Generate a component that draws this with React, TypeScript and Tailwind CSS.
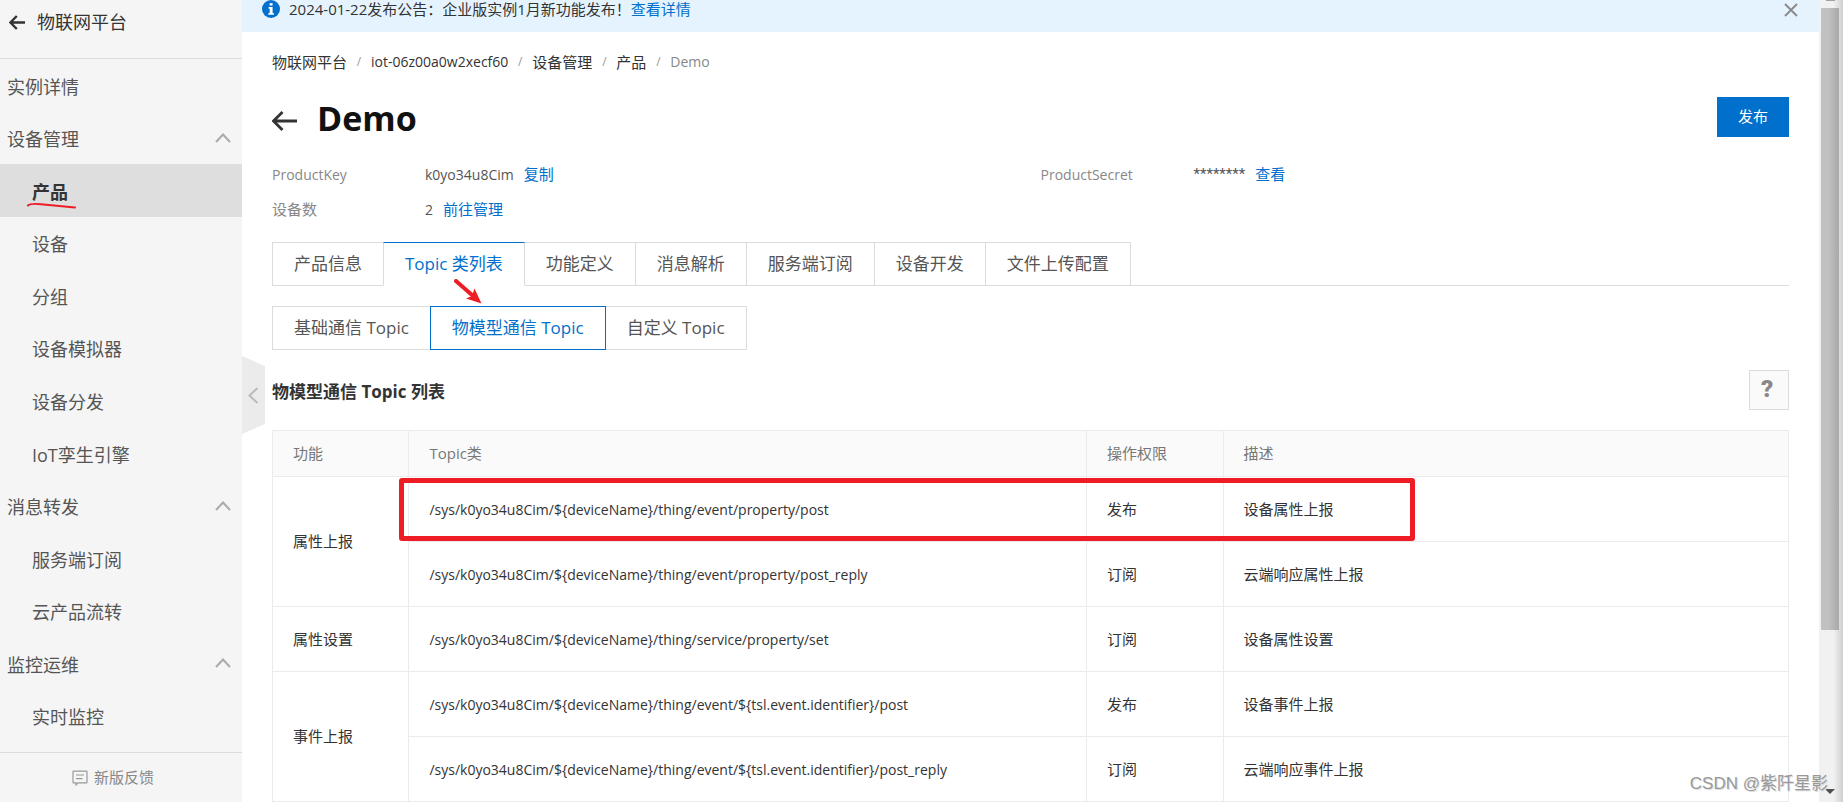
import React from "react";

type NavItem = { label: string; child?: boolean; active?: boolean; open?: boolean };

const NAV: NavItem[] = [
  { label: "实例详情" },
  { label: "设备管理", open: true },
  { label: "产品", child: true, active: true },
  { label: "设备", child: true },
  { label: "分组", child: true },
  { label: "设备模拟器", child: true },
  { label: "设备分发", child: true },
  { label: "IoT孪生引擎", child: true },
  { label: "消息转发", open: true },
  { label: "服务端订阅", child: true },
  { label: "云产品流转", child: true },
  { label: "监控运维", open: true },
  { label: "实时监控", child: true },
];

const CRUMBS = [
  { label: "物联网平台" },
  { label: "iot-06z00a0w2xecf60", latin: true },
  { label: "设备管理" },
  { label: "产品" },
];
const TABS = ["产品信息", "Topic 类列表", "功能定义", "消息解析", "服务端订阅", "设备开发", "文件上传配置"];
const SUB_TABS = ["基础通信 Topic", "物模型通信 Topic", "自定义 Topic"];

type Row = { group?: string; span?: number; topic: string; access: string; desc: string };

const ROWS: Row[] = [
  { group: "属性上报", span: 2, topic: "/sys/k0yo34u8Cim/${deviceName}/thing/event/property/post", access: "发布", desc: "设备属性上报" },
  { topic: "/sys/k0yo34u8Cim/${deviceName}/thing/event/property/post_reply", access: "订阅", desc: "云端响应属性上报" },
  { group: "属性设置", span: 1, topic: "/sys/k0yo34u8Cim/${deviceName}/thing/service/property/set", access: "订阅", desc: "设备属性设置" },
  { group: "事件上报", span: 2, topic: "/sys/k0yo34u8Cim/${deviceName}/thing/event/${tsl.event.identifier}/post", access: "发布", desc: "设备事件上报" },
  { topic: "/sys/k0yo34u8Cim/${deviceName}/thing/event/${tsl.event.identifier}/post_reply", access: "订阅", desc: "云端响应事件上报" },
];

function BackArrow({ className }: { className: string }) {
  return (
    <svg viewBox="0 0 25 20" className={className} fill="none" stroke="#333" aria-hidden="true">
      <path d="M25 10H2M10.5 1L1.5 10l9 9" strokeWidth="2.8" />
    </svg>
  );
}

function Sidebar() {
  return (
    <aside className="flex w-[242px] shrink-0 flex-col bg-[#f5f5f5] text-[18px] text-[#555]">
      <div className="flex h-[59px] shrink-0 items-start gap-3 border-b border-[#dcdcdc] pt-[9px] pl-[9px] text-[#333]">
        <button type="button" aria-label="返回" className="flex h-[26px] items-center">
          <svg viewBox="0 0 16 15" className="h-[15px] w-4" fill="none" stroke="#333" aria-hidden="true">
            <path d="M16 7.5H2M7.8 1L1.4 7.5l6.4 6.5" strokeWidth="2.4" />
          </svg>
        </button>
        <span className="leading-[26px]">物联网平台</span>
      </div>
      <nav className="grid min-h-0 flex-1 auto-rows-fr pb-[10px]">
        {NAV.map((item) => (
          <a
            key={item.label}
            href="#"
            className={
              "flex items-center justify-between pr-[11px] " +
              (item.child ? "pl-8 " : "pl-[7px] ") +
              (item.active ? "bg-[#dedede] font-bold text-[#333]" : "")
            }
          >
            <span className="relative pt-1">
              {item.label}
              {item.active && (
                <svg viewBox="0 0 50 8" className="absolute -bottom-1 -left-[5px] h-2 w-[50px] max-w-none" fill="none" aria-hidden="true">
                  <path d="M1 3.5C3 1.5 8 1.6 14 2.2L48 5.4" stroke="#ee1c25" strokeWidth="2" strokeLinecap="round" />
                </svg>
              )}
            </span>
            {item.open && (
              <svg viewBox="0 0 16 10" className="h-[10px] w-4" fill="none" stroke="#aaa" strokeWidth="2" aria-hidden="true">
                <path d="M1 9l7-7.5L15 9" />
              </svg>
            )}
          </a>
        ))}
      </nav>
      <button type="button" className="flex h-[50px] shrink-0 items-center justify-center gap-[6px] border-t border-[#dcdcdc] pr-4 text-[15px] text-[#888]">
        <svg viewBox="0 0 16 16" className="h-4 w-4" fill="none" stroke="#999" strokeWidth="1.2" aria-hidden="true">
          <path d="M1.6 1.1h12.8q.6 0 .6.6v10.6q0 .6-.6.6H6l-2 2v-2H1.6q-.6 0-.6-.6V1.7q0-.6.6-.6zM4 5h8M4 8.6h6.5" />
        </svg>
        新版反馈
      </button>
    </aside>
  );
}

type FieldProps = { label: string; latin?: boolean; value: string; masked?: boolean; action: string };

function Field({ label, latin, value, masked, action }: FieldProps) {
  return (
    <div className="flex h-[35px] items-center">
      <dt className={"w-[153px] shrink-0 text-[#888] " + (latin ? "text-[14px]" : "")}>{label}</dt>
      <dd className="flex items-center gap-[10px] text-[#555]">
        <span className={masked ? "font-['Roboto',sans-serif]" : "text-[14px]"}>{value}</span>
        <a href="#" className="text-[#0070cc]">{action}</a>
      </dd>
    </div>
  );
}

function TopicTable() {
  const cell = "border border-[#ebebeb] px-5";
  return (
    <div className="relative mt-5">
      <table className="w-full table-fixed border-collapse text-left">
        <colgroup>
          <col className="w-[9%]" />
          <col className="w-[44.7%]" />
          <col className="w-[9%]" />
          <col />
        </colgroup>
        <thead>
          <tr className="h-[46px] bg-[#fafafa] text-[#777]">
            {["功能", "Topic类", "操作权限", "描述"].map((h) => (
              <th key={h} scope="col" className={cell + " font-normal"}>{h}</th>
            ))}
          </tr>
        </thead>
        <tbody>
          {ROWS.map((row) => (
            <tr key={row.topic} className="h-[65px]">
              {row.group && <td rowSpan={row.span} className={cell}>{row.group}</td>}
              <td className={cell + " text-[14px]"}>{row.topic}</td>
              <td className={cell}>{row.access}</td>
              <td className={cell}>{row.desc}</td>
            </tr>
          ))}
        </tbody>
      </table>
      <div className="pointer-events-none absolute top-12 left-[127px] h-[63px] w-[67%] rounded-[3px] border-[5px] border-[#ee1c25]" />
    </div>
  );
}

export default function App() {
  return (
    <div className="relative flex h-screen overflow-hidden bg-white font-['Open_Sans','Noto_Sans_CJK_SC',sans-serif] text-[15px] text-[#333]">
      <Sidebar />
      <div className="relative flex min-w-0 flex-1 flex-col overflow-hidden">
        <div className="flex h-8 shrink-0 items-start gap-[9px] bg-[#e5f3ff] pr-[21px] pl-5">
          <svg viewBox="0 0 18 18" className="h-[18px] w-[18px]" aria-hidden="true">
            <circle cx="9" cy="9" r="9" fill="#0070cc" />
            <path d="M7.6 3.2h3v2.4h-3zM6.6 7h4v6h1.2v1.8H6.4V13h1.3V8.7H6.6z" fill="#fff" />
          </svg>
          <p className="flex-1 leading-[18px]">
            2024-01-22发布公告：企业版实例1月新功能发布！<a href="#" className="text-[#0070cc]">查看详情</a>
          </p>
          <button type="button" aria-label="关闭" className="pt-[3px]">
            <svg viewBox="0 0 14 14" className="h-[14px] w-[14px]" stroke="#888" strokeWidth="1.8" aria-hidden="true">
              <path d="M1 1l12 12M13 1L1 13" />
            </svg>
          </button>
        </div>

        <main className="pt-5 pr-[30px] pl-[30px]">
          <nav aria-label="breadcrumb" className="flex h-5 items-center leading-5">
            {CRUMBS.map((c) => (
              <React.Fragment key={c.label}>
                <a href="#" className={c.latin ? "text-[14px]" : ""}>{c.label}</a>
                <span className="w-6 text-center text-xs text-[#999]">/</span>
              </React.Fragment>
            ))}
            <span className="text-[14px] text-[#888]">Demo</span>
          </nav>

          <header className="mt-[25px] flex h-10 items-center">
            <button type="button" aria-label="返回" className="pt-2">
              <BackArrow className="h-5 w-[25px]" />
            </button>
            <h1 className="ml-5 flex-1 pt-[2px] text-[34px] leading-10 font-bold text-[#111]">Demo</h1>
            <button type="button" className="h-10 w-[72px] bg-[#0070cc] pb-[2px] text-white">发布</button>
          </header>

          <dl className="mt-5 grid grid-cols-2 gap-x-5">
            <Field label="ProductKey" latin value="k0yo34u8Cim" action="复制" />
            <Field label="ProductSecret" latin value="********" masked action="查看" />
            <Field label="设备数" value="2" action="前往管理" />
          </dl>

          <div role="tablist" className="mt-[15px] flex border-b border-[#dcdcdc] pl-px text-[17px] text-[#555]">
            {TABS.map((t, i) => (
              <button
                key={t}
                type="button"
                role="tab"
                aria-selected={i === 1}
                className={
                  "-mb-px -ml-px h-11 border px-[21px] " +
                  (i === 1
                    ? "relative border-[#dcdcdc] border-t-[#0070cc] border-b-white text-[#0070cc]"
                    : "border-[#dcdcdc]")
                }
              >
                {t}
              </button>
            ))}
          </div>

          <div className="relative mt-5 flex pl-px text-[17px] text-[#555]">
            {SUB_TABS.map((t, i) => (
              <button
                key={t}
                type="button"
                aria-pressed={i === 1}
                className={
                  "-ml-px h-11 border px-[21px] " +
                  (i === 1 ? "relative border-[#0070cc] text-[#0070cc]" : "border-[#dcdcdc]")
                }
              >
                {t}
              </button>
            ))}
            <svg viewBox="0 0 28 25" className="pointer-events-none absolute -top-[27px] left-[182px] h-[25px] w-7" aria-hidden="true">
              <path d="M2 2L18 16" stroke="#ee1c25" strokeWidth="4" strokeLinecap="round" />
              <path d="M20.5 9.5L27.5 24.5L12 19.5L18 17z" fill="#ee1c25" />
            </svg>
          </div>

          <div className="mt-5 flex h-10 items-center justify-between">
            <h2 className="pt-1 text-[17px] font-bold">物模型通信 Topic 列表</h2>
            <button type="button" aria-label="帮助" className="h-10 w-10 border border-[#dcdcdc] bg-[#fafafa] pr-1 pb-[2px] font-['Roboto',sans-serif] text-2xl leading-9 font-black text-[#888]">
              ?
            </button>
          </div>

          <TopicTable />
        </main>

        <button type="button" aria-label="收起菜单" className="absolute top-[356px] left-0">
          <svg viewBox="0 0 23 78" className="h-[78px] w-[23px]" aria-hidden="true">
            <path d="M0 0l23 10v58L0 78z" fill="#ebebeb" />
            <path d="M15.5 32l-8 7.5 8 7.5" fill="none" stroke="#bbb" strokeWidth="2" />
          </svg>
        </button>
      </div>

      <div className="flex w-6 shrink-0 flex-col items-center bg-linear-to-r from-[#f1f1f1] from-60% to-[#d0d0d0] pr-1 pl-[2px]" aria-hidden="true">
        <div className="h-px w-[9px] bg-[#a0a0a0]" />
        <div className="mt-[7px] h-[622px] w-full bg-linear-to-r from-[#c1c1c1] from-40% to-[#a8a8a8]" />
        <svg viewBox="0 0 10 5" className="mt-auto mb-2 h-[5px] w-[10px]">
          <path d="M0 0h10L5 5z" fill="#505050" />
        </svg>
      </div>

      <p className="absolute right-[15px] bottom-[5px] font-['Liberation_Sans','Noto_Sans_CJK_SC',sans-serif] text-[17px] leading-[26px] text-[#999] [text-shadow:1px_1px_0_#ddd]">
        CSDN @紫阡星影
      </p>
    </div>
  );
}
